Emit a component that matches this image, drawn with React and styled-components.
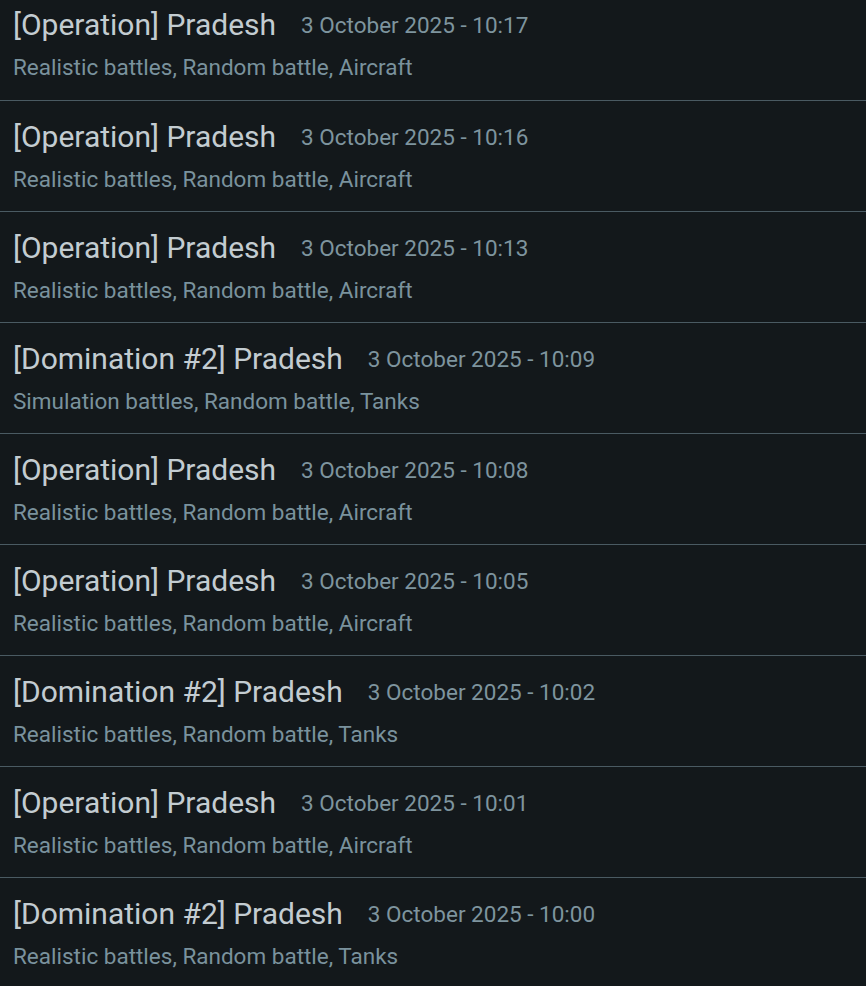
import React from 'react';
import styled, { createGlobalStyle } from 'styled-components';

const GlobalStyle = createGlobalStyle`
  html, body {
    margin: 0;
    padding: 0;
    background: #13181b;
  }
  body {
    font-family: Roboto, "Liberation Sans", sans-serif;
    overflow: hidden;
  }
`;

const List = styled.div`
  display: flex;
  flex-direction: column;
  margin-top: -11.6px;
`;

const Row = styled.div`
  display: flex;
  flex-direction: column;
  gap: 11px;
  padding: 19px 13px 18.125px;
  border-top: 1px solid #4a5a62;
`;

const Head = styled.div`
  display: flex;
  align-items: center;
  gap: 25px;
`;

const Title = styled.span`
  font-size: 30px;
  color: #c3ccd1;
  line-height: 34px;
`;

const Date = styled.span`
  font-size: 22.5px;
  color: #7e949e;
`;

const Tags = styled.div`
  font-size: 22.5px;
  color: #7a929d;
  line-height: 28px;
`;

const battles = [
  ['[Operation] Pradesh', '3 October 2025 - 10:17', 'Realistic battles, Random battle, Aircraft'],
  ['[Operation] Pradesh', '3 October 2025 - 10:16', 'Realistic battles, Random battle, Aircraft'],
  ['[Operation] Pradesh', '3 October 2025 - 10:13', 'Realistic battles, Random battle, Aircraft'],
  ['[Domination #2] Pradesh', '3 October 2025 - 10:09', 'Simulation battles, Random battle, Tanks'],
  ['[Operation] Pradesh', '3 October 2025 - 10:08', 'Realistic battles, Random battle, Aircraft'],
  ['[Operation] Pradesh', '3 October 2025 - 10:05', 'Realistic battles, Random battle, Aircraft'],
  ['[Domination #2] Pradesh', '3 October 2025 - 10:02', 'Realistic battles, Random battle, Tanks'],
  ['[Operation] Pradesh', '3 October 2025 - 10:01', 'Realistic battles, Random battle, Aircraft'],
  ['[Domination #2] Pradesh', '3 October 2025 - 10:00', 'Realistic battles, Random battle, Tanks'],
];

const App = () => {
  return (
    <>
      <GlobalStyle />
      <List>
        {battles.map(([title, date, tags], idx) => (
          <Row key={idx}>
            <Head>
              <Title>{title}</Title>
              <Date>{date}</Date>
            </Head>
            <Tags>{tags}</Tags>
          </Row>
        ))}
      </List>
    </>
  );
};

export default App;
